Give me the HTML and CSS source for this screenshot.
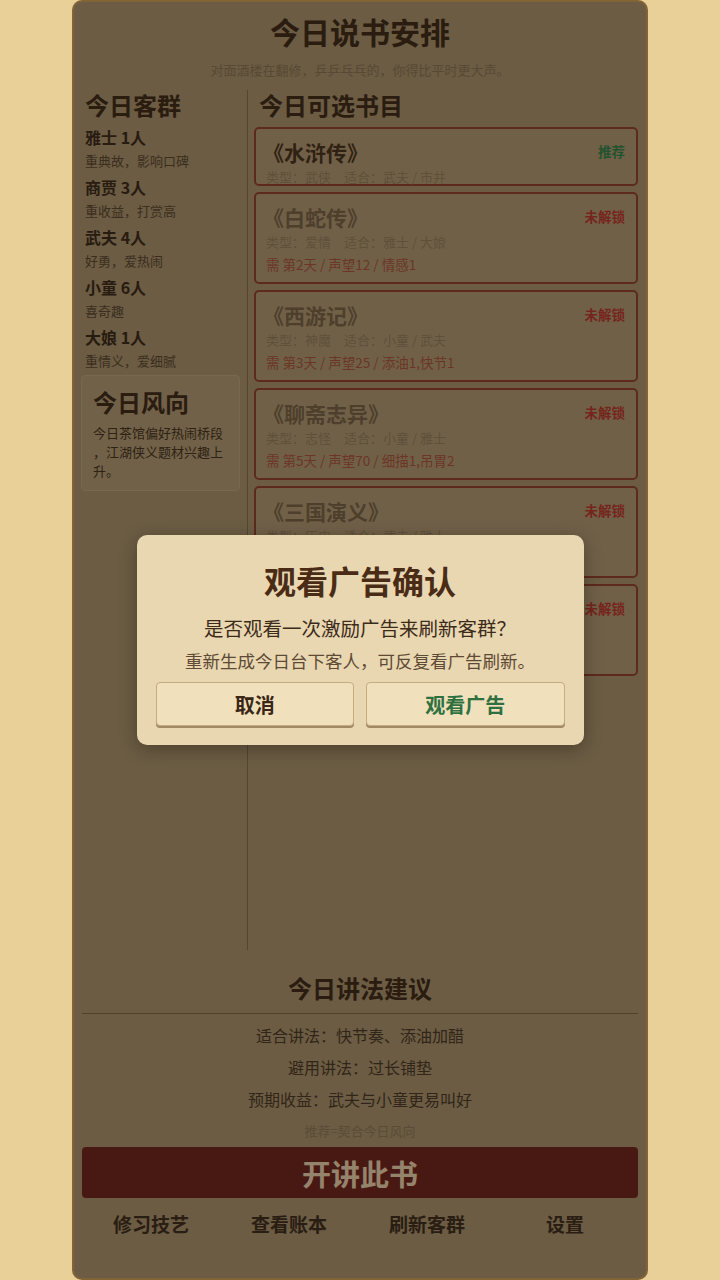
FILE: index.html
```html
<!DOCTYPE html>
<html lang="zh-CN">
<head>
  <meta charset="UTF-8" />
  <title>今日说书安排</title>
  <link rel="stylesheet" href="styles.css">
</head>
<body>
  <!-- Main game panel -->
  <div class="panel">
    <div class="header">
      <div class="title">今日说书安排</div>
      <div class="subtitle">对面酒楼在翻修，乒乒乓乓的，你得比平时更大声。</div>
    </div>

    <div class="columns">
      <!-- Left: today's audience -->
      <div class="col-left">
        <div class="heading">今日客群</div>
        <div class="guest"><div class="guest-name">雅士 1人</div><div class="guest-desc">重典故，影响口碑</div></div>
        <div class="guest"><div class="guest-name">商贾 3人</div><div class="guest-desc">重收益，打赏高</div></div>
        <div class="guest"><div class="guest-name">武夫 4人</div><div class="guest-desc">好勇，爱热闹</div></div>
        <div class="guest"><div class="guest-name">小童 6人</div><div class="guest-desc">喜奇趣</div></div>
        <div class="guest"><div class="guest-name">大娘 1人</div><div class="guest-desc">重情义，爱细腻</div></div>

        <div class="trend">
          <div class="trend-title">今日风向</div>
          <div class="trend-text">今日茶馆偏好热闹桥段，江湖侠义题材兴趣上升。</div>
        </div>
      </div>

      <!-- Right: book list -->
      <div class="col-right">
        <div class="heading heading-right">今日可选书目</div>

        <div class="book book-short">
          <div class="book-head"><span class="book-title">《水浒传》</span><span class="tag tag-rec">推荐</span></div>
          <div class="book-meta">类型：武侠<span class="gap"></span>适合：武夫 / 市井</div>
        </div>

        <div class="book locked">
          <div class="book-head"><span class="book-title">《白蛇传》</span><span class="tag tag-lock">未解锁</span></div>
          <div class="book-meta">类型：爱情<span class="gap"></span>适合：雅士 / 大娘</div>
          <div class="book-req">需 第2天 / 声望12 / 情感1</div>
        </div>

        <div class="book locked">
          <div class="book-head"><span class="book-title">《西游记》</span><span class="tag tag-lock">未解锁</span></div>
          <div class="book-meta">类型：神魔<span class="gap"></span>适合：小童 / 武夫</div>
          <div class="book-req">需 第3天 / 声望25 / 添油1,快节1</div>
        </div>

        <div class="book locked">
          <div class="book-head"><span class="book-title">《聊斋志异》</span><span class="tag tag-lock">未解锁</span></div>
          <div class="book-meta">类型：志怪<span class="gap"></span>适合：小童 / 雅士</div>
          <div class="book-req">需 第5天 / 声望70 / 细描1,吊胃2</div>
        </div>

        <!-- These two are partly covered by the dialog -->
        <div class="book locked book-covered">
          <div class="book-head"><span class="book-title">《三国演义》</span><span class="tag tag-lock">未解锁</span></div>
          <div class="book-meta">类型：历史<span class="gap"></span>适合：武夫 / 雅士</div>
        </div>

        <div class="book locked book-covered">
          <div class="book-head"><span class="book-title"></span><span class="tag tag-lock">未解锁</span></div>
        </div>
      </div>
    </div>

    <!-- Advice section -->
    <div class="advice">
      <div class="advice-title">今日讲法建议</div>
      <div class="advice-line">适合讲法：快节奏、添油加醋</div>
      <div class="advice-line">避用讲法：过长铺垫</div>
      <div class="advice-line">预期收益：武夫与小童更易叫好</div>
      <div class="advice-note">推荐=契合今日风向</div>
    </div>

    <button class="start-btn">开讲此书</button>

    <div class="nav">
      <div class="nav-item">修习技艺</div>
      <div class="nav-item">查看账本</div>
      <div class="nav-item">刷新客群</div>
      <div class="nav-item">设置</div>
    </div>

    <!-- Dim overlay + ad confirm dialog -->
    <div class="overlay">
      <div class="modal">
        <div class="modal-title">观看广告确认</div>
        <div class="modal-question">是否观看一次激励广告来刷新客群？</div>
        <div class="modal-sub">重新生成今日台下客人，可反复看广告刷新。</div>
        <div class="modal-actions">
          <button class="modal-btn">取消</button>
          <button class="modal-btn modal-btn-ok">观看广告</button>
        </div>
      </div>
    </div>
  </div>
</body>
</html>
```

FILE: styles.css
```css
/* Reset */
html, body {
  margin: 0;
  padding: 0;
}

body {
  font-family: "Noto Sans CJK SC", "Noto Sans", sans-serif;
  background-color: #e9cf98;
  display: flex;
  justify-content: center;
  height: 1280px;
  overflow: hidden;
}

/* Main panel */
.panel {
  position: relative;
  width: 576px;
  height: 1280px;
  box-sizing: border-box;
  border: 2px solid #d9a75c;
  border-radius: 10px;
  background-color: #b29971;
  padding: 0 8px 34px;
  display: flex;
  flex-direction: column;
}

/* Header */
.header {
  text-align: center;
}

.title {
  margin-top: 9px;
  font-size: 30px;
  line-height: 40px;
  font-weight: 700;
  color: #462f19;
}

.subtitle {
  margin-top: 9px;
  font-size: 13px;
  line-height: 19px;
  color: #937a57;
}

/* Two columns */
.columns {
  margin-top: 11px;
  flex: 1;
  min-height: 0;
  display: flex;
}

.col-left {
  width: 165px;
  border-right: 1px solid #8e7553;
}

.col-right {
  flex: 1;
}

.heading {
  font-size: 24px;
  line-height: 30px;
  font-weight: 700;
  color: #462f19;
  padding-left: 3px;
  margin-bottom: 5px;
}

.heading-right {
  padding-left: 11px;
  margin-bottom: 7px;
}

/* Guest list */
.guest {
  padding-left: 3px;
  margin-bottom: 2px;
}

.guest-name {
  font-size: 16px;
  line-height: 24px;
  font-weight: 700;
  color: #432e1b;
}

.guest-desc {
  font-size: 13px;
  line-height: 24px;
  color: #644e35;
}

/* Trend box */
.trend {
  margin: 0 7px 0 -1px;
  padding: 11px 11px 10px;
  border: 1px solid #c9ad80;
  border-radius: 4px;
  background-color: #bca279;
}

.trend-title {
  font-size: 24px;
  line-height: 30px;
  font-weight: 700;
  color: #462f19;
  margin-bottom: 6px;
}

.trend-text {
  font-size: 13px;
  line-height: 19px;
  color: #4e3922;
  line-break: anywhere;
}

/* Book cards */
.book {
  margin: 0 0 6px 6px;
  padding: 9px 11px 7px 8px;
  border: 2px solid #9c4630;
  border-radius: 5px;
  background-color: #bca178;
}

.book-short {
  height: 59px;
  box-sizing: border-box;
}

.book-covered {
  height: 92px;
  box-sizing: border-box;
}

.book-head {
  display: flex;
  justify-content: space-between;
  align-items: center;
  height: 28px;
}

.book-title {
  font-size: 21px;
  line-height: 28px;
  font-weight: 700;
  color: #503921;
  margin-left: -1px;
}

.locked .book-title {
  color: #82694b;
}

.tag {
  font-size: 13.5px;
  font-weight: 700;
  margin-top: -2px;
}

.tag-rec {
  color: #3b8a4e;
}

.tag-lock {
  color: #c43f30;
}

.book-meta {
  font-size: 13px;
  line-height: 22px;
  color: #9e8561;
  white-space: nowrap;
  padding-left: 2px;
}

.book-meta .gap {
  display: inline-block;
  width: 13px;
}

.book-req {
  font-size: 13.5px;
  line-height: 22px;
  color: #b35a40;
  padding-left: 2px;
}

/* Advice */
.advice {
  text-align: center;
  margin-top: 23px;
}

.advice-title {
  font-size: 24px;
  line-height: 30px;
  font-weight: 700;
  color: #462f19;
  padding-bottom: 10px;
  border-bottom: 1px solid #8d6c43;
  margin-bottom: 5px;
}

.advice-line {
  font-size: 16px;
  line-height: 32px;
  color: #533f2a;
}

.advice-note {
  margin-top: 6px;
  font-size: 13px;
  line-height: 20px;
  color: #977f5c;
}

/* Start button */
.start-btn {
  margin-top: 6px;
  height: 51px;
  border: none;
  border-radius: 4px;
  background-color: #782b21;
  color: #f8dcb4;
  font-family: "Noto Sans CJK SC", "Noto Sans", sans-serif;
  font-size: 29px;
  font-weight: 700;
  padding: 0;
}

/* Bottom nav */
.nav {
  margin-top: 6px;
  margin-right: 4px;
  display: grid;
  grid-template-columns: repeat(4, 1fr);
}

.nav-item {
  text-align: center;
  font-size: 19px;
  line-height: 40px;
  font-weight: 700;
  color: #46321e;
}

/* Dim overlay */
.overlay {
  position: absolute;
  inset: -2px;
  border-radius: 10px;
  background-color: rgba(0, 0, 0, 0.4);
  display: flex;
  justify-content: center;
  align-items: center;
}

/* Confirm dialog */
.modal {
  width: 447px;
  box-sizing: border-box;
  padding: 22px 19px 19px;
  border-radius: 10px;
  background-color: #e9d7b1;
  box-shadow: 0 4px 18px rgba(0, 0, 0, 0.3);
  text-align: center;
}

.modal-title {
  font-size: 32px;
  line-height: 46px;
  font-weight: 700;
  color: #4a2c16;
}

.modal-question {
  margin-top: 10px;
  font-size: 19.5px;
  line-height: 29px;
  color: #3d2b1a;
}

.modal-sub {
  margin-top: 6px;
  font-size: 17.5px;
  line-height: 26px;
  color: #5e4a34;
}

.modal-actions {
  margin-top: 8px;
  display: grid;
  grid-template-columns: 1fr 1fr;
  gap: 12px;
}

.modal-btn {
  height: 44px;
  border: 1px solid #c4ab80;
  border-radius: 4px;
  background-color: #f0e0bb;
  box-shadow: 0 2px 0 #a08a66;
  font-family: "Noto Sans CJK SC", "Noto Sans", sans-serif;
  font-size: 20px;
  font-weight: 700;
  color: #3a2616;
  padding: 0;
}

.modal-btn-ok {
  color: #2f7040;
}
```
